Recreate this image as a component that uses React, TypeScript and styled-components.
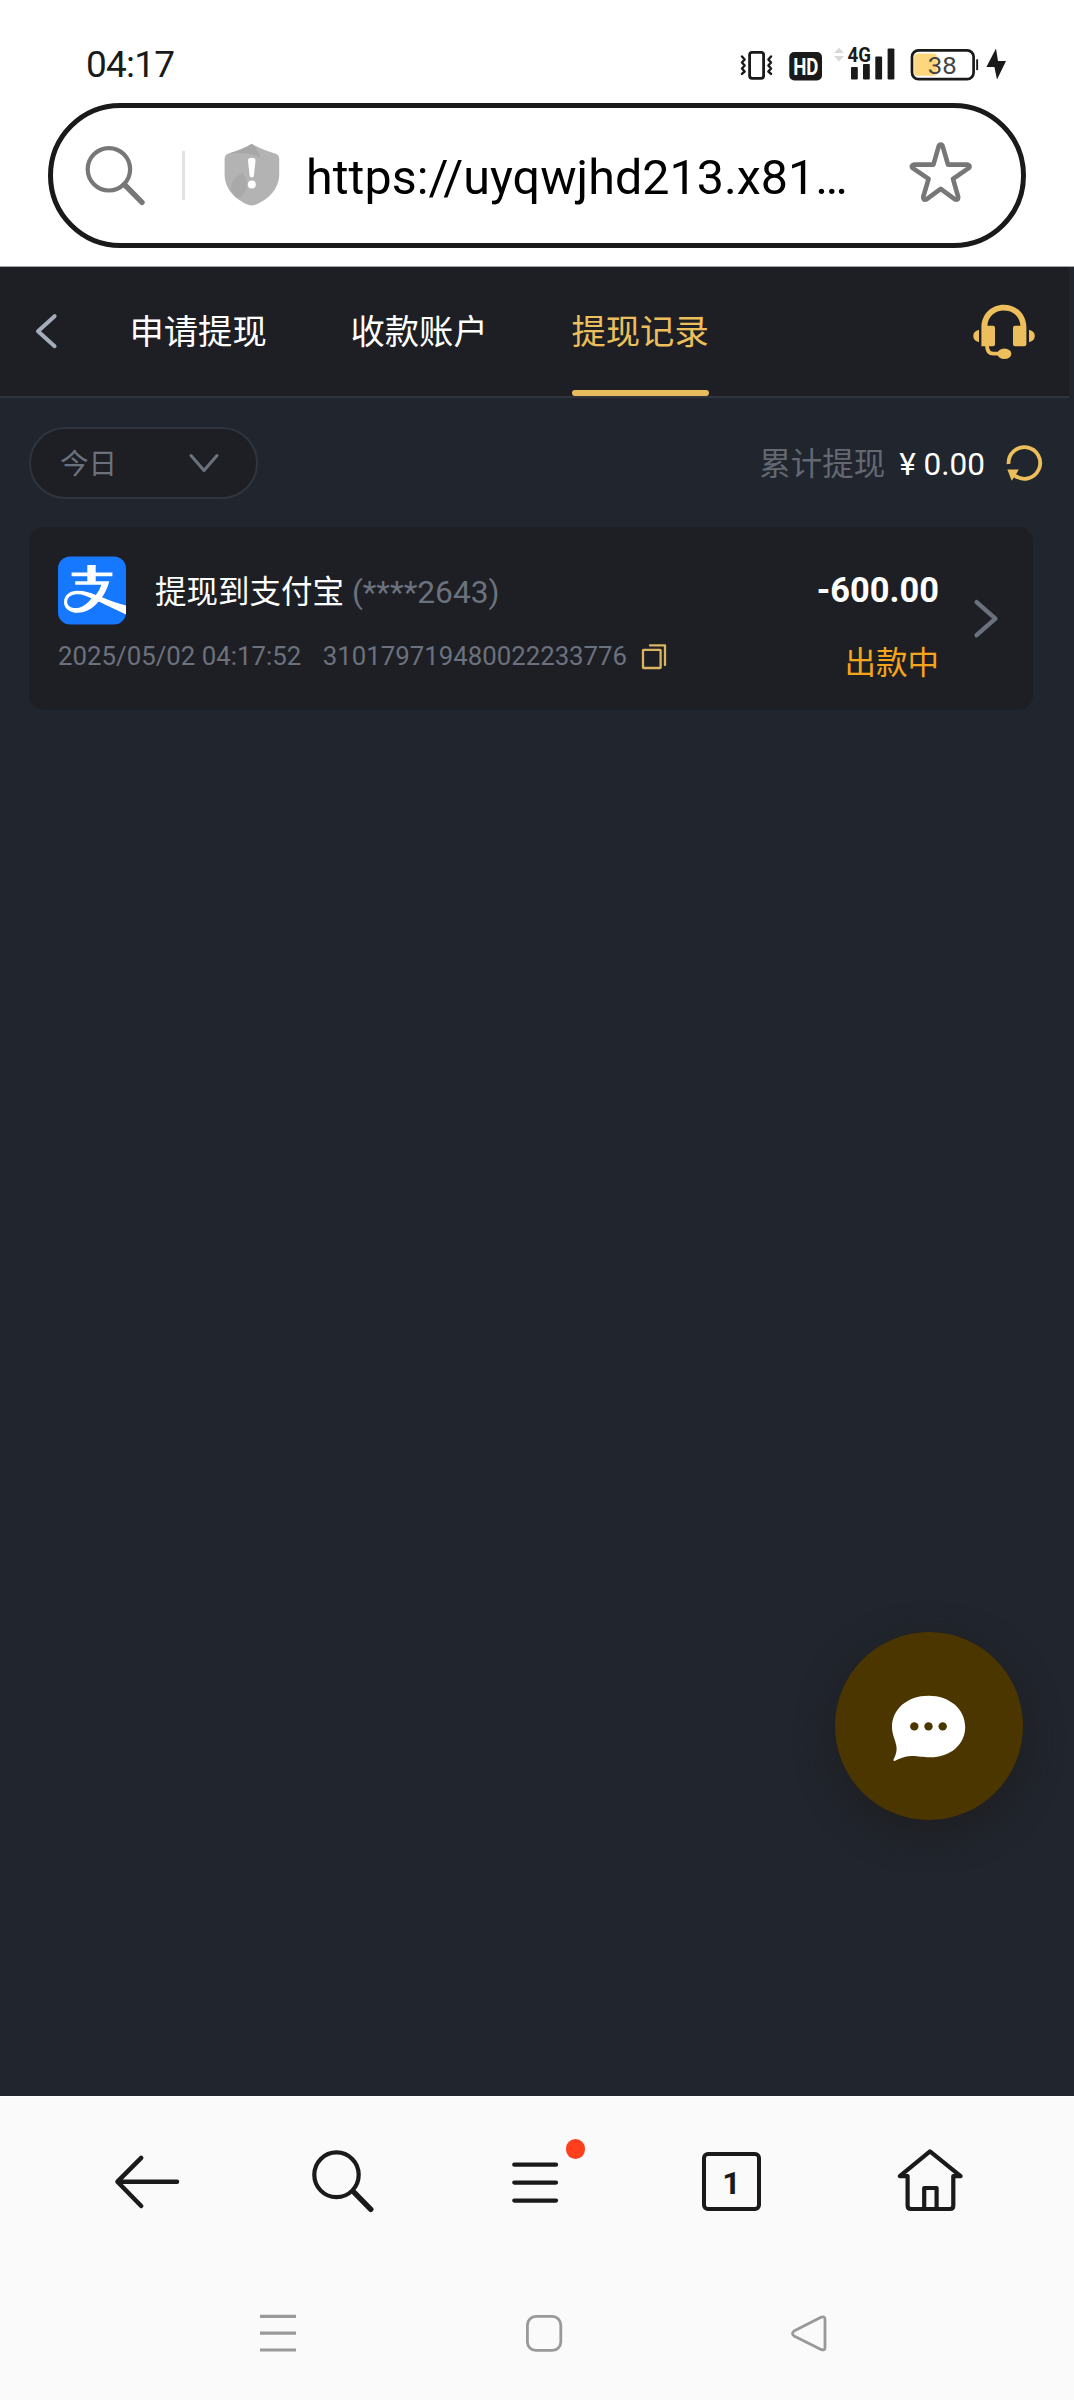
import React from "react";
import styled, { createGlobalStyle } from "styled-components";

const C = {
  ink: "#1a1a1a",
  gold: "#ecbf5c",
  panel: "#1e1f24",
  page: "#21252d",
  line: "#30343e",
  muted: "#6b717d",
  chrome: "#fafafa",
};

const Global = createGlobalStyle`
  * { box-sizing: border-box; }
  body { margin: 0; background: #fff; font-family: Roboto, "Noto Sans CJK SC", sans-serif; }
  svg { display: block; flex: none; overflow: visible; }
  button { background: none; border: 0; padding: 0; font: inherit; color: inherit; }
`;

const Screen = styled.div`
  width: 1074px;
  height: 2400px;
  display: flex;
  flex-direction: column;
  overflow: hidden;
`;

/* status bar */
const StatusBar = styled.div`
  height: 103px;
  flex: none;
  display: flex;
  justify-content: space-between;
  padding: 0 64px 0 86px;
`;
const Clock = styled.div`
  margin-top: 43px;
  font-size: 37px;
  line-height: 44px;
  letter-spacing: -0.8px;
  color: ${C.ink};
`;
const StatusIcons = styled.div`
  display: flex;
  align-items: flex-start;
  padding-top: 40px;
`;

/* address bar */
const AddressBar = styled.div`
  height: 145px;
  flex: none;
  margin: 0 48px 18px;
  border: 5px solid ${C.ink};
  border-radius: 73px;
  display: flex;
  padding: 30px 0 0 30px;
`;
const Separator = styled.i`
  width: 3px;
  height: 49px;
  margin: 13px 39px 0 38px;
  background: #e2e2e2;
`;
const ShieldSlot = styled.span`
  margin-top: 5px;
`;
const Url = styled.div`
  width: 545px;
  margin: 12px 0 0 26px;
  font-size: 48.4px;
  letter-spacing: 0.05px;
  line-height: 56px;
  color: #000;
  white-space: nowrap;
`;
const StarButton = styled.button`
  margin: 0 0 0 57px;
  align-self: flex-start;
`;

/* web page */
const Page = styled.main`
  position: relative;
  height: 1830px;
  flex: none;
  background: ${C.page};
  border-top: 1px solid #a3a8ab;
`;
const TabBar = styled.nav`
  width: 1069px;
  height: 131px;
  background: ${C.panel};
  border-bottom: 2px solid ${C.line};
  display: flex;
`;
const BackButton = styled.button`
  width: 129.5px;
  height: 127px;
  padding-left: 33px;
  display: flex;
  align-items: center;
`;
const Tab = styled.button<{ $active?: boolean }>`
  height: 129px;
  margin-right: 83.8px;
  padding-top: 7px;
  font-size: 34.3px;
  line-height: 116px;
  color: ${(p) => (p.$active ? C.gold : "#fff")};
  display: flex;
  flex-direction: column;
  justify-content: space-between;
  &::after {
    content: "";
    height: 6px;
    border-radius: 3px;
    background: ${(p) => (p.$active ? "#e8bb5c" : "transparent")};
  }
`;
const SupportButton = styled.button`
  margin: 36px 33px 0 auto;
  align-self: flex-start;
`;

const FilterRow = styled.div`
  display: flex;
  align-items: center;
  width: 1042px;
  margin: 29px 0 28px;
  padding-left: 29px;
`;
const DateSelect = styled.button`
  width: 229px;
  height: 72px;
  border: 2px solid ${C.line};
  border-radius: 36px;
  background: ${C.panel};
  color: ${C.muted};
  font-size: 28.6px;
  display: flex;
  align-items: center;
  justify-content: space-between;
  padding: 0 36px 0 29px;
`;
const DateLabel = styled.span`
  padding-top: 2px;
  line-height: 40px;
`;
const Total = styled.div`
  margin-left: auto;
  display: flex;
  align-items: center;
  font-size: 31.5px;
  line-height: 44px;
  color: #636872;
`;
const TotalLabel = styled.span`
  padding-top: 4px;
`;
const TotalValue = styled.span`
  color: #fff;
  padding-top: 4px;
  margin: 0 21px 0 14px;
`;

const Card = styled.article`
  width: 1004px;
  height: 183px;
  margin-left: 29px;
  border-radius: 15px;
  background: ${C.panel};
  display: flex;
  padding: 29px 33px 0 29px;
`;
const Details = styled.div`
  display: flex;
  flex-direction: column;
`;
const TitleLine = styled.div`
  display: flex;
  align-items: center;
  height: 68px;
  font-size: 31.5px;
  color: #fff;
`;
const Title = styled.span`
  margin: 0 0 3px 29px;
  white-space: pre;
`;
const Account = styled.span`
  font-size: 31.7px;
  color: ${C.muted};
`;
const MetaLine = styled.div`
  display: flex;
  align-items: center;
  margin-top: 16px;
  font-size: 25.8px;
  line-height: 32px;
  color: ${C.muted};
`;
const OrderNo = styled.span`
  margin: 0 14px 0 21.5px;
`;
const Amounts = styled.div`
  margin-left: auto;
  padding-top: 14px;
  display: flex;
  flex-direction: column;
  align-items: flex-end;
`;
const Amount = styled.span`
  font-size: 34.4px;
  line-height: 40px;
  font-weight: 700;
  color: #fff;
`;
const State = styled.span`
  margin-top: 32px;
  font-size: 31.5px;
  line-height: 44px;
  color: #f5a51c;
`;
const RowArrow = styled.div`
  margin: 41px 0 0 33px;
`;

const ChatButton = styled.button`
  position: absolute;
  left: 835px;
  top: 1365px;
  width: 188px;
  height: 188px;
  border-radius: 50%;
  background: #4b3600;
  box-shadow: 0 12px 36px rgba(28, 28, 30, 0.75);
  display: flex;
  align-items: center;
  justify-content: center;
  padding-top: 4px;
`;

/* browser toolbar + system navigation */
const Toolbar = styled.footer`
  height: 160px;
  flex: none;
  background: ${C.chrome};
  border-top: 1px solid #fff;
  display: flex;
  padding: 48px 0 0 110px;
`;
const ToolButton = styled.button<{ $gap: number }>`
  margin-right: ${(p) => p.$gap}px;
  align-self: flex-start;
  position: relative;
`;
const Dot = styled.i`
  position: absolute;
  left: 55.5px;
  top: -6px;
  width: 19.5px;
  height: 19.5px;
  border-radius: 50%;
  background: #ff3f1d;
`;
const TabCount = styled.span`
  display: flex;
  align-items: center;
  justify-content: center;
  width: 59px;
  height: 59px;
  margin-top: 7px;
  border: 4.4px solid ${C.ink};
  border-radius: 6px;
  font-size: 32px;
  font-weight: 700;
  color: ${C.ink};
  padding-top: 3px;
`;
const SystemNav = styled.div`
  flex: 1;
  background: ${C.chrome};
  display: flex;
  justify-content: space-between;
  padding: 54px 245px 0 258px;
`;

type Box = [number, number, number, number];
const Icon = ({ box, children, color = "none", w = 4 }: { box: Box; children: React.ReactNode; color?: string; w?: number }) => (
  <svg width={box[2]} height={box[3]} viewBox={box.join(" ")} fill="none" stroke={color} strokeWidth={w} strokeLinecap="round" strokeLinejoin="round">
    {children}
  </svg>
);

const StatusGlyphs = () => (
  <Icon box={[738, 40, 272, 44]}>
    <g stroke={C.ink} strokeWidth="2.8">
      <rect x="749.6" y="52.3" width="14" height="26" rx="2.5" />
      <path d="M742 56.5l2.6 3-2.6 3 2.6 3-2.6 3 2.6 3-2.6 2.4M771 56.5l-2.6 3 2.6 3-2.6 3 2.6 3-2.6 3 2.6 2.4" strokeWidth="2.4" />
    </g>
    <rect x="789.3" y="52" width="32.7" height="28.4" rx="5" fill={C.ink} />
    <text x="793.2" y="74.6" fontSize="23.5" fontWeight="700" textLength="25.2" lengthAdjust="spacingAndGlyphs" fill="#fff" fontFamily="Roboto, sans-serif">HD</text>
    <path d="M834 53l5-5.2 5 5.2zM834 56l5 5.4 5-5.4z" fill="#d8d8d8" />
    <text x="847.4" y="62" fontSize="21" fontWeight="700" textLength="23.5" lengthAdjust="spacingAndGlyphs" fill={C.ink} fontFamily="Roboto, sans-serif">4G</text>
    <g fill={C.ink}>
      <rect x="851" y="67" width="6.8" height="12.4" rx="1" />
      <rect x="863" y="64" width="6.8" height="15.4" rx="1" />
      <rect x="875.3" y="56.6" width="6.8" height="22.8" rx="1" />
      <rect x="887.6" y="48.6" width="6.8" height="30.8" rx="1" />
      <rect x="976.2" y="59.3" width="1.9" height="10.8" />
      <path d="M996 48.4L986.4 67H994.4L997 79.6 1006 61H998z" />
    </g>
    <rect x="914.2" y="53.4" width="22.6" height="22.3" rx="3" fill="#fdd77e" />
    <rect x="912" y="50.3" width="61.6" height="28.8" rx="6.5" stroke={C.ink} strokeWidth="2.7" />
    <text x="927.8" y="74" fontSize="24.5" textLength="29" lengthAdjust="spacingAndGlyphs" fill="#444" fontFamily="Roboto, sans-serif">38</text>
  </Icon>
);

const Shield = () => (
  <Icon box={[224, 143, 56, 64]}>
    <path d="M251.8 143.7C258 148 267 151 275 153.6Q279.2 155 279.2 159V174C279.2 189 269 199 255.5 204.8Q251.8 206.4 248 204.8C235 199 224.6 189 224.6 174V159Q224.6 155 228.6 153.6C237 151 245 148 251.8 143.7Z" fill="#b3b3b3" />
    <path d="M251.8 143.7C256 147 259 152 260 158Q250 151 228.6 153.6C237 151 245 148 251.8 143.7Z" fill="#a2a2a2" opacity=".7" />
    <path d="M231 191Q230 178 243 173Q248 180 246 190Q241 199 236 198Z" fill="#a5a5a5" opacity=".7" />
    <path d="M251.7 157.7Q255.8 157.7 255.5 161L253.8 176.5Q251.7 178.5 249.7 176.5L248 161Q247.7 157.7 251.7 157.7Z" fill="#fff" />
    <circle cx="251.8" cy="184.6" r="4" fill="#fff" />
  </Icon>
);

const Headset = () => (
  <Icon box={[973, 303, 63, 58]}>
    <g fill={C.gold}>
      <path d="M981.4 346.3V327.2C981.4 314.5 991 304.7 1003.9 304.7S1026.4 314.5 1026.4 327.2V344.3Q1026.4 346.3 1024.4 346.3H1015Q1013 346.3 1013 344.3V327.7Q1013 325.7 1015 325.7H1020.4C1020 316.5 1013 310.4 1003.9 310.4S987.8 316.5 987.4 325.7H993Q995 325.7 995 327.7V344.3Q995 346.3 993 346.3Z" />
      <path d="M979 329.7V342.2Q973.3 341 973.3 336T979 329.7ZM1029 329.7V342.2Q1034.8 341 1034.8 336T1029 329.7Z" />
      <ellipse cx="1004.4" cy="353.7" rx="7" ry="5.3" />
    </g>
    <path d="M987 345.5C987 350.5 989 353.7 993.5 353.7H1000" stroke={C.gold} strokeWidth="3.8" />
  </Icon>
);

const Refresh = () => (
  <Icon box={[1006, 444, 36, 38]}>
    <path d="M1008.6 464A15.8 15.8 0 1 1 1014.4 475.2" stroke={C.gold} strokeWidth="3.8" strokeLinecap="butt" />
    <path d="M1007.4 469.4H1018.8L1016 474.4 1011.7 480.8Z" fill={C.gold} />
  </Icon>
);

const Alipay = () => (
  <Icon box={[58, 556, 68, 69]}>
    <rect x="58" y="556.5" width="68" height="68" rx="12" fill="#1677ff" />
    <path d="M87.3 565H95.7V572.6H112.4V576.2H95.7V581.2H109.3C107.8 587.5 105 593 102 597.3C109 600.4 117.5 603.2 126 605.6V614.4C117 610.3 107.5 606 98.7 601.6C92.5 608.8 86 612.8 77.5 612.8C69.5 612.8 64 608.3 64 602.2C64 595.4 69.7 590.8 77.5 590.8C84.5 590.8 90 592.6 95.8 595C98.5 591.8 100.2 588.5 101.2 584.8H75.2V581.2H87.3V576.2H71.6V572.6H87.3ZM91.5 598.4C86 595.5 81.5 593.8 76.5 594.2C71 594.6 67 597.5 67.2 602C67.4 606.3 71.8 608.5 77 608C82.5 607.4 87 603.7 91.5 598.4Z" fill="#fff" />
  </Icon>
);

export default function App() {
  return (
    <Screen>
      <Global />
      <StatusBar>
        <Clock>04:17</Clock>
        <StatusIcons><StatusGlyphs /></StatusIcons>
      </StatusBar>

      <AddressBar>
        <Icon box={[83, 138, 61, 70]} color="#777" w={4.2}>
          <circle cx="108.9" cy="169.3" r="21.2" />
          <path d="M124.4 184.5L142 202.4" strokeWidth="5.4" />
        </Icon>
        <Separator />
        <ShieldSlot><Shield /></ShieldSlot>
        <Url>https://uyqwjhd213.x81…</Url>
        <StarButton>
          <Icon box={[908, 138, 66, 66]} color="#777" w={4.6}>
            <path d="M940.7 144.6Q942.2 144.6 942.8 146.6L948 164.6H967.6Q971 166 968.6 168.2L953 178.8 958.2 197Q958.2 200.6 955 199.4L940.7 188.8 926.4 199.4Q923 200.6 923.2 197L928.6 178.8 912.8 168.2Q910.4 166 913.8 164.6H933.4L938.6 146.6Q939.2 144.6 940.7 144.6Z" />
          </Icon>
        </StarButton>
      </AddressBar>

      <Page>
        <TabBar>
          <BackButton>
            <Icon box={[33, 311, 26, 40]} color="#a5acba">
              <path d="M54.6 316.2L38 331.2 54.6 346.2" />
            </Icon>
          </BackButton>
          <Tab>申请提现</Tab>
          <Tab>收款账户</Tab>
          <Tab $active>提现记录</Tab>
          <SupportButton><Headset /></SupportButton>
        </TabBar>

        <FilterRow>
          <DateSelect>
            <DateLabel>今日</DateLabel>
            <Icon box={[188, 453, 32, 20]} color={C.muted} w={3}>
              <path d="M191 455.5L204 470.5 217 455.5" />
            </Icon>
          </DateSelect>
          <Total>
            <TotalLabel>累计提现</TotalLabel>
            <TotalValue>¥ 0.00</TotalValue>
            <Refresh />
          </Total>
        </FilterRow>

        <Card>
          <Details>
            <TitleLine>
              <Alipay />
              <Title>提现到支付宝<Account> (****2643)</Account></Title>
            </TitleLine>
            <MetaLine>
              <span>2025/05/02 04:17:52</span>
              <OrderNo>310179719480022233776</OrderNo>
              <Icon box={[642, 643, 26, 27]} color="#d9b560" w={2.3}>
                <rect x="644" y="649.8" width="17.6" height="18.2" rx=".5" />
                <path d="M651 645.4H666V665" />
              </Icon>
            </MetaLine>
          </Details>
          <Amounts>
            <Amount>-600.00</Amount>
            <State>出款中</State>
          </Amounts>
          <RowArrow>
            <Icon box={[972, 597, 28, 43]} color={C.muted} w={4.4}>
              <path d="M976.6 602.2L995.4 618.6 976.6 635.2" />
            </Icon>
          </RowArrow>
        </Card>

        <ChatButton>
          <Icon box={[890, 1693, 78, 70]}>
            <path d="M928.6 1695.8C949.5 1695.8 965.2 1709 965.2 1727C965.2 1744.5 950.5 1757.3 930 1757.3C922 1757.3 918 1755.8 911 1756C904.5 1756.2 899.5 1758.5 894.5 1761C893.6 1761.2 893.2 1760.4 893.6 1759.6C896 1755 897.3 1750 896.3 1745.5C895 1739 892 1734 892 1727C892 1709 907.5 1695.8 928.6 1695.8Z" fill="#fff" />
            <g fill="#4b3600">
              <circle cx="914.3" cy="1726.4" r="4.2" />
              <circle cx="928.5" cy="1726.4" r="4.2" />
              <circle cx="942.7" cy="1726.4" r="4.2" />
            </g>
          </Icon>
        </ChatButton>
      </Page>

      <Toolbar>
        <ToolButton $gap={126}>
          <Icon box={[110, 2145, 74, 74]} color={C.ink} w={4.5}>
            <path d="M177 2181.7H117.5M141.2 2157.8L117.5 2181.7 141.2 2206" />
          </Icon>
        </ToolButton>
        <ToolButton $gap={135}>
          <Icon box={[310, 2145, 65, 74]} color={C.ink} w={4.2}>
            <ellipse cx="336.5" cy="2174.8" rx="22.2" ry="22.4" />
            <path d="M353.4 2191.6L370.8 2209.4" strokeWidth="5.4" />
          </Icon>
        </ToolButton>
        <ToolButton $gap={132}>
          <Icon box={[510, 2145, 60, 74]} color={C.ink} w={4.3}>
            <path d="M514.3 2164.7H556M514.3 2182.6H556M514.3 2200.6H556" />
          </Icon>
          <Dot />
        </ToolButton>
        <ToolButton $gap={135}>
          <TabCount>1</TabCount>
        </ToolButton>
        <ToolButton $gap={0}>
          <Icon box={[896, 2145, 70, 74]} color={C.ink} w={4.2}>
            <path d="M930 2151.4L899.8 2176.2H907.6V2205.6Q907.6 2209 911 2209H950Q953.3 2209 953.3 2205.6V2176.2H960.6ZM924.2 2209V2188H936.6V2209" />
          </Icon>
        </ToolButton>
      </Toolbar>
      <SystemNav>
        <Icon box={[258, 2310, 40, 46]} color="#999" w={3.2}>
          <path d="M260 2316.4H296M260 2333.2H296M260 2350H296" strokeLinecap="butt" />
        </Icon>
        <Icon box={[523, 2310, 42, 46]} color="#999" w={2.8}>
          <rect x="527.4" y="2316.4" width="33.4" height="34" rx="8.5" />
        </Icon>
        <Icon box={[789, 2310, 40, 46]} color="#999" w={2.8}>
          <path d="M820.5 2317.4Q825 2315.6 825 2319.5V2347.5Q825 2351 821 2349.4L794 2336Q791 2333.4 794 2331Z" />
        </Icon>
      </SystemNav>
    </Screen>
  );
}
